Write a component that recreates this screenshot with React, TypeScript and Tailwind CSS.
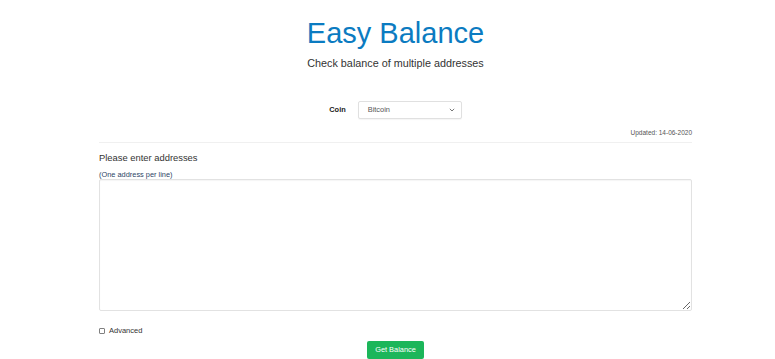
export default function App() {
  return (
    <div className="min-h-screen bg-white font-['Liberation_Sans',Arial,sans-serif] text-[#333]">
      <div className="ml-[99px] flex w-[593px] flex-col pt-[17px]">
        <header className="flex flex-col items-center">
          <h1 className="text-[29px] leading-[33px] text-[#0b7bc1]">Easy Balance</h1>
          <p className="mt-[6px] text-[10.8px] leading-[14px] text-[#333]">
            Check balance of multiple addresses
          </p>
        </header>

        <div className="mt-[31px] flex items-center justify-center gap-[12px]">
          <label className="text-[7.4px] font-bold text-[#222]">Coin</label>
          <div className="flex h-[18px] w-[104px] items-center justify-between rounded-[2px] border border-[#e0e0e0] bg-white pl-[9px] pr-[6px] shadow-[0_1px_1px_rgba(0,0,0,0.04)]">
            <span className="text-[7.4px] text-[#555]">Bitcoin</span>
            <svg width="6" height="4" viewBox="0 0 6 4" fill="none">
              <path d="M0.8 0.8 L3 3 L5.2 0.8" stroke="#777" strokeWidth="1" />
            </svg>
          </div>
        </div>

        <p className="mt-[9px] text-right text-[6.5px] leading-[10px] text-[#555]">
          Updated: 14-06-2020
        </p>
        <hr className="mt-[4px] border-t border-[#f0f0f0]" />

        <h2 className="mt-[9px] text-[9.4px] leading-[12px] text-[#333]">
          Please enter addresses
        </h2>
        <p className="mt-[6px] text-[7.4px] leading-[9px] text-[#2d4566]">
          (One address per line)
        </p>
        <textarea className="h-[132px] w-full resize-y rounded-[2px] border border-[#e2e2e2] bg-white shadow-[inset_0_1px_1px_rgba(0,0,0,0.04)] outline-none" />

        <label className="mt-[15px] flex h-[10px] items-center gap-[4px] text-[7.5px] text-[#333]">
          <span className="h-[6px] w-[6px] rounded-[1px] border border-[#808080] bg-white" />
          Advanced
        </label>

        <div className="mt-[5px] flex justify-center">
          <button className="h-[18px] rounded-[2px] bg-[#1cb65a] px-[8px] text-[7.4px] text-white">
            Get Balance
          </button>
        </div>
      </div>
    </div>
  );
}
